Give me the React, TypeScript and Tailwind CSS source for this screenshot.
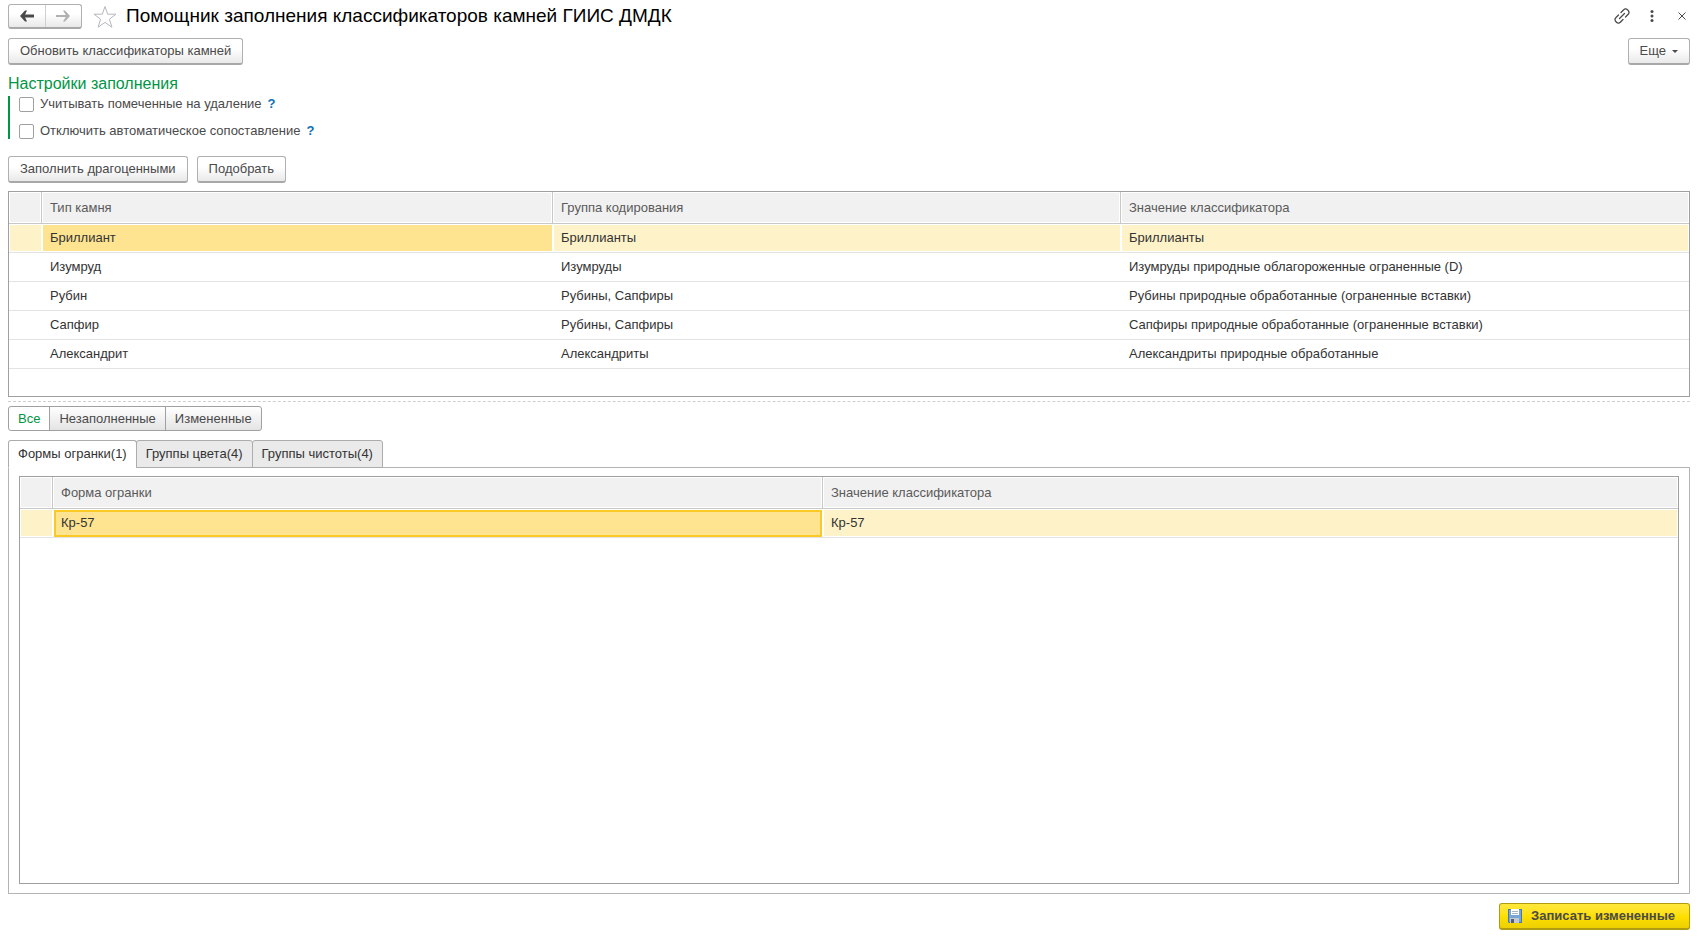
import { useState } from 'react';

type Column = { title: string; width: string };

const stoneColumns: Column[] = [
  { title: 'Тип камня', width: 'w-[511px]' },
  { title: 'Группа кодирования', width: 'w-[568px]' },
  { title: 'Значение классификатора', width: '' },
];

const stoneRows = [
  ['Бриллиант', 'Бриллианты', 'Бриллианты'],
  ['Изумруд', 'Изумруды', 'Изумруды природные облагороженные ограненные (D)'],
  ['Рубин', 'Рубины, Сапфиры', 'Рубины природные обработанные (ограненные вставки)'],
  ['Сапфир', 'Рубины, Сапфиры', 'Сапфиры природные обработанные (ограненные вставки)'],
  ['Александрит', 'Александриты', 'Александриты природные обработанные'],
];

const cutColumns: Column[] = [
  { title: 'Форма огранки', width: 'w-[770px]' },
  { title: 'Значение классификатора', width: '' },
];

const cutRows = [['Кр-57', 'Кр-57']];

const filters = ['Все', 'Незаполненные', 'Измененные'];
const tabs = ['Формы огранки(1)', 'Группы цвета(4)', 'Группы чистоты(4)'];

const buttonClass =
  'h-[27px] rounded-[3px] border border-[#b0b0b0] border-b-2 border-b-[#a8a8a8] bg-linear-to-b from-white from-40% to-[#e9e9e9] px-[11px] text-[#4a4a4a] whitespace-nowrap';

function DataTable({
  columns,
  rows,
  focused = false,
}: {
  columns: Column[];
  rows: string[][];
  focused?: boolean;
}) {
  const [selected, setSelected] = useState(0);

  return (
    <table className="w-full table-fixed border-separate border-spacing-0 text-left">
      <colgroup>
        <col className="w-[33px]" />
        {columns.map((c) => (
          <col key={c.title} className={c.width} />
        ))}
      </colgroup>
      <thead>
        <tr className="h-8 bg-[#f1f1f1] text-[#5a5a5a]">
          <th className="border-r border-b border-[#c8c8c8] p-0 shadow-[inset_0_0_0_1px_#fff]" />
          {columns.map((c) => (
            <th
              key={c.title}
              className="truncate border-r border-b border-[#c8c8c8] p-0 pl-2 font-normal shadow-[inset_0_0_0_1px_#fff] last:border-r-0"
            >
              {c.title}
            </th>
          ))}
        </tr>
      </thead>
      <tbody>
        {rows.map((row, i) => {
          const active = i === selected;
          return (
            <tr
              key={row[0]}
              onClick={() => setSelected(i)}
              className={`h-[29px] text-[#333] ${active ? 'bg-[#fef2c8]' : ''}`}
            >
              <td className="border-b border-[#e3e3e3] p-0 shadow-[inset_0_0_0_1px_#fff]" />
              {row.map((value, j) => (
                <td
                  key={j}
                  className={`truncate border-b border-[#e3e3e3] p-0 pl-2 shadow-[inset_0_0_0_1px_#fff] ${
                    active && j === 0 ? 'bg-[#fee491]' : ''
                  } ${active && j === 0 && focused ? 'outline-2 -outline-offset-3 outline-[#fbc926]' : ''}`}
                >
                  {value}
                </td>
              ))}
            </tr>
          );
        })}
      </tbody>
    </table>
  );
}

function Option({ id, label }: { id: string; label: string }) {
  return (
    <div className="flex h-4 items-center">
      <input
        id={id}
        type="checkbox"
        className="h-[15px] w-[15px] appearance-none rounded-[2px] border border-[#a0a0a0] bg-white checked:bg-[#009646]"
      />
      <label htmlFor={id} className="ml-1.5 text-[#4a4a4a]">
        {label}
      </label>
      <button type="button" className="ml-1.5 font-bold text-[#0a70b8]">
        ?
      </button>
    </div>
  );
}

export default function App() {
  const [filter, setFilter] = useState(0);
  const [tab, setTab] = useState(0);

  return (
    <div className="flex min-h-screen flex-col bg-white pt-1 pr-[9px] pb-1.5 pl-2 font-['Liberation_Sans',Arial,sans-serif] text-[13px] leading-4">
      <header className="flex h-[25px] items-center">
        <div className="flex h-[25px] w-[74px] rounded-[3px] border border-[#b0b0b0] border-b-2 border-b-[#a8a8a8] bg-linear-to-b from-white from-40% to-[#e9e9e9]">
          <button type="button" aria-label="Назад" className="flex flex-1 items-center justify-center border-r border-[#d0d0d0]">
            <svg width="14" height="12" viewBox="0 0 14 12">
              <path d="M4 4.500h10v3H4z" fill="#4a4a4a" />
              <path d="M0 6L5 .5h2L4.500 6L7 11.500H5z" fill="#4a4a4a" />
            </svg>
          </button>
          <button type="button" aria-label="Вперед" className="flex flex-1 items-center justify-center">
            <svg width="14" height="12" viewBox="0 0 14 12">
              <path d="M0 5h11v2H0z" fill="#b0b0b0" />
              <path d="M14 6L9 .5H7L10.500 6L7 11.500h2z" fill="#b0b0b0" />
            </svg>
          </button>
        </div>
        <button type="button" aria-label="В избранное" className="ml-[11px]">
          <svg width="24" height="24" viewBox="0 0 24 24" fill="none" stroke="#b4b8bc">
            <path d="M12 1.500l2.700 7.700h8.300l-6.600 5 2.500 8L12 17.400l-6.900 4.800 2.500-8-6.600-5h8.300z" />
          </svg>
        </button>
        <h1 className="ml-[9px] pb-0.5 text-[19px] leading-6 text-black">Помощник заполнения классификаторов камней ГИИС ДМДК</h1>
        <div className="ml-auto flex items-center pb-0.5">
          <button type="button" aria-label="Получить ссылку">
            <svg width="16" height="16" viewBox="0 0 16 16" fill="none" stroke="#4a4a4a" strokeWidth="1.300" strokeLinecap="round">
              <path d="M5.500 10.500l5-5" />
              <path d="M7 4.500l2.700-2.700a2.600 2.600 0 0 1 3.800 0l.7.7a2.600 2.600 0 0 1 0 3.800L11.500 9" />
              <path d="M9 11.500l-2.700 2.700a2.600 2.600 0 0 1-3.800 0l-.7-.7a2.600 2.600 0 0 1 0-3.800L4.500 7" />
            </svg>
          </button>
          <button type="button" aria-label="Меню" className="ml-5">
            <svg width="4" height="12" viewBox="0 0 4 12" fill="#4a4a4a">
              <circle cx="2" cy="1.500" r="1.500" />
              <circle cx="2" cy="6" r="1.500" />
              <circle cx="2" cy="10.500" r="1.500" />
            </svg>
          </button>
          <button type="button" aria-label="Закрыть" className="mr-1 ml-6">
            <svg width="8" height="8" viewBox="0 0 8 8" stroke="#4a4a4a">
              <path d="M.5 .5l7 7M7.500 .5l-7 7" />
            </svg>
          </button>
        </div>
      </header>

      <div className="mt-[9px] flex justify-between">
        <button type="button" className={buttonClass}>
          Обновить классификаторы камней
        </button>
        <button type="button" className={`${buttonClass} flex items-center`}>
          Еще
          <svg className="ml-1.5" width="6" height="3" viewBox="0 0 6 3" fill="#4a4a4a">
            <path d="M0 0h6L3 3z" />
          </svg>
        </button>
      </div>

      <h2 className="mt-[9px] text-base leading-5 text-[#009646]">Настройки заполнения</h2>
      <div className="mt-0.5 flex h-[43px] flex-col justify-between border-l-2 border-[#009646] pl-[9px]">
        <Option id="deleted" label="Учитывать помеченные на удаление" />
        <Option id="no-auto" label="Отключить автоматическое сопоставление" />
      </div>

      <div className="mt-[17px] flex gap-[9px]">
        <button type="button" className={buttonClass}>
          Заполнить драгоценными
        </button>
        <button type="button" className={buttonClass}>
          Подобрать
        </button>
      </div>

      <section className="mt-2 min-h-[206px] border border-[#a0a0a0]">
        <DataTable columns={stoneColumns} rows={stoneRows} />
      </section>

      <div className="mt-1 border-t border-dashed border-[#cfcfcf]" />

      <div className="mt-1 flex">
        {filters.map((name, i) => (
          <button
            key={name}
            type="button"
            onClick={() => setFilter(i)}
            className={`-mr-px h-[25px] border border-[#a0a0a0] px-[9px] first:rounded-l-[3px] last:rounded-r-[3px] ${
              i === filter ? 'bg-white text-[#009646]' : 'bg-linear-to-b from-white to-[#e4e4e4] text-[#4a4a4a]'
            }`}
          >
            {name}
          </button>
        ))}
      </div>

      <div role="tablist" className="z-10 mt-[9px] -mb-px flex">
        {tabs.map((name, i) => (
          <button
            key={name}
            type="button"
            role="tab"
            aria-selected={i === tab}
            onClick={() => setTab(i)}
            className={`-mr-px h-7 rounded-t-[3px] border border-[#acacac] px-[9px] text-[#333] ${
              i === tab ? 'border-b-white bg-white' : 'bg-[#eaeaea]'
            }`}
          >
            {name}
          </button>
        ))}
      </div>
      <div className="flex flex-1 flex-col border border-[#b4b4b4] px-[10px] pt-2 pb-[9px]">
        <section className="flex-1 border border-[#a0a0a0]">
          <DataTable columns={cutColumns} rows={cutRows} focused />
        </section>
      </div>

      <footer className="mt-[9px] flex justify-end">
        <button
          type="button"
          className="flex h-[27px] items-center rounded-[3px] border border-b-2 border-[#b09c10] bg-linear-to-b from-[#ffe83a] via-[#ffe000] to-[#ecd000] pr-[14px] pl-2 font-bold text-[#4a4a4a]"
        >
          <svg className="mr-[9px]" width="14" height="14" viewBox="0 0 14 14">
            <path d="M0 0h14v14H1l-1-1z" fill="#4c77a8" />
            <path d="M1 1h12v12H1z" fill="#76a5d6" />
            <path d="M3 0h8v6H3z" fill="#fff" />
            <path d="M4 2h6v1H4zM4 4h6v1H4z" fill="#a9b4c0" />
            <path d="M2 9h9v5H2z" fill="#c3c8ce" />
            <path d="M3 10h3v4H3z" fill="#53606e" />
          </svg>
          Записать измененные
        </button>
      </footer>
    </div>
  );
}
